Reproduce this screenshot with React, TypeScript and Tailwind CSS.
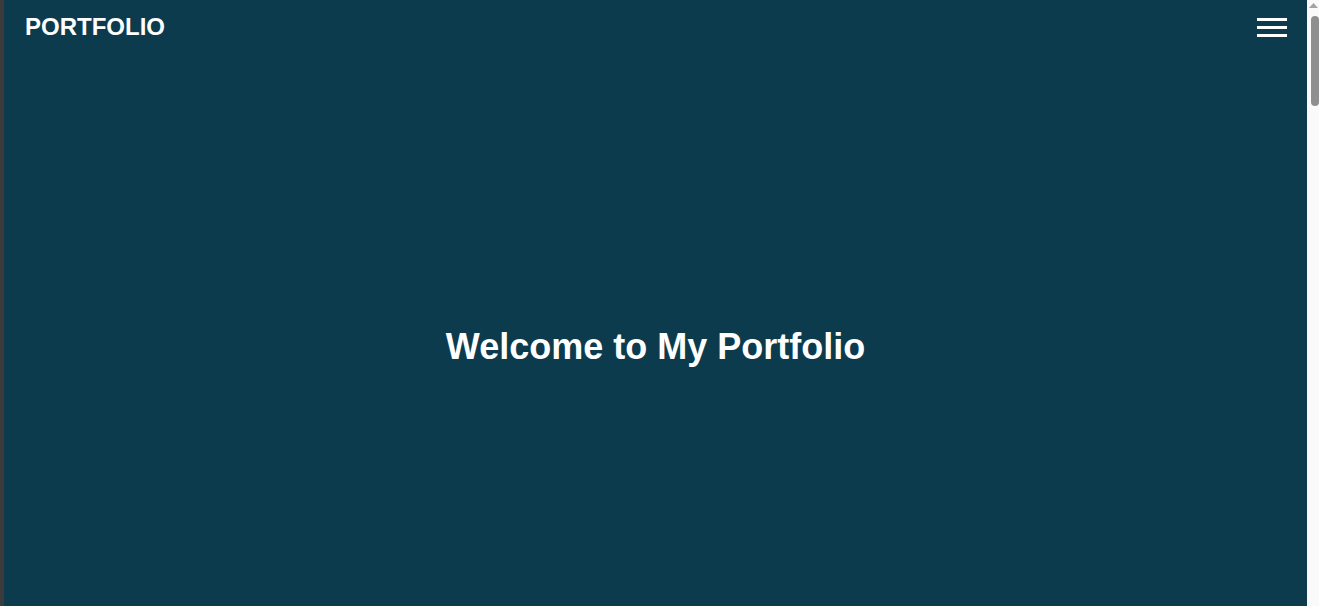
// Portfolio landing page: header with hamburger, centered hero, more sections below the fold

const sections = [
  { id: 'about', title: 'About Me', text: 'A short introduction about who I am and what I do.' },
  { id: 'projects', title: 'Projects', text: 'A selection of things I have built recently.' },
  { id: 'skills', title: 'Skills', text: 'Languages, frameworks and tools I work with.' },
  { id: 'contact', title: 'Contact', text: 'Feel free to reach out for collaborations.' },
];

const Header = () => (
  <header className="flex h-[54px] items-center justify-between pl-[21px] pr-[20px]">
    <a href="#" className="text-2xl font-bold text-white">
      PORTFOLIO
    </a>
    <button aria-label="menu" className="flex w-[30px] flex-col gap-[5px]">
      <span className="block h-[3px] w-full bg-white" />
      <span className="block h-[3px] w-full bg-white" />
      <span className="block h-[3px] w-full bg-white" />
    </button>
  </header>
);

// 스크롤바 (헤드리스 화면에서는 숨겨지므로 직접 그림)
const ScrollRail = () => (
  <div className="flex w-[12px] shrink-0 flex-col items-center bg-[#fafafa]">
    <svg width="9" height="6" viewBox="0 0 9 6" className="mt-[3px]">
      <polygon points="4.5,0 9,5 0,5" fill="#a3a3a3" />
    </svg>
    <div className="ml-[3px] mt-[7px] h-[90px] w-[8px] rounded-full bg-[#8f8f8f]" />
  </div>
);

export default function App() {
  return (
    <div
      className="flex h-screen text-white"
      style={{ fontFamily: '"Liberation Sans", Arial, sans-serif' }}
    >
      <main className="flex-1 overflow-y-auto border-l-4 border-[#3b3b3b] bg-[#0c3b4e]">
        <Header />

        {/* 히어로 */}
        <section className="flex h-[586px] items-center justify-center">
          <h1 className="text-4xl font-bold">Welcome to My Portfolio</h1>
        </section>

        {sections.map((s) => (
          <section key={s.id} id={s.id} className="flex h-[815px] flex-col items-center justify-center gap-4 px-8">
            <h2 className="text-3xl font-bold">{s.title}</h2>
            <p className="text-lg text-[#cfe3ea]">{s.text}</p>
          </section>
        ))}
      </main>
      <ScrollRail />
    </div>
  );
}
